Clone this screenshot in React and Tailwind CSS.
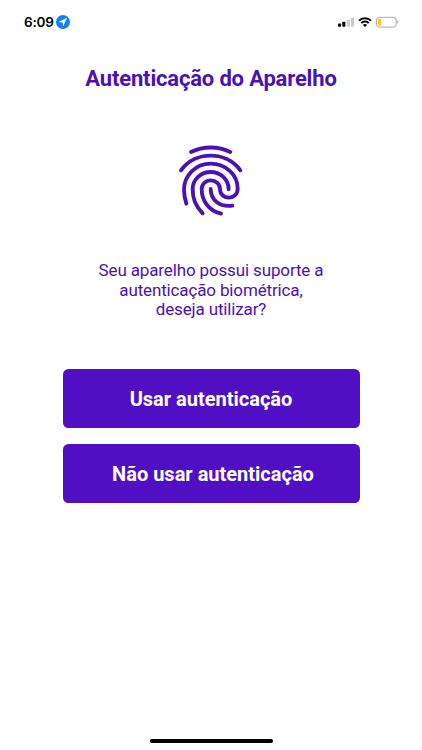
const Fingerprint = () => {
  return (
    <svg
      className="h-[92px] w-[92px]"
      viewBox="0 0 276 276"
      fill="none"
      stroke="currentColor"
      strokeWidth="11.5"
      strokeLinecap="round"
      strokeLinejoin="round"
    >
      <path d="M78 51C114 33 160 33 196 51" />
      <path d="M48 106C90 47 184 47 226 106" />
      <path d="M64 206C61 196 57 182 57 164C57 121 92 86 137 86C182 86 218 119 218 161C218 177 206 188 191 188S165 177 165 162C165 147 152 136 137 136S110 148 110 162C110 198 132 227 168 236" />
      <path d="M113 235C91 211 83 192 83 162C83 133 108 111 137 111C168 111 191 134 191 163" />
      <path d="M137 162C137 194 163 217 202 212" />
    </svg>
  );
};

const StatusBar = () => {
  return (
    <div className="flex h-11 items-center justify-between pr-[23px] pl-6">
      <div className="flex items-center gap-0.5">
        <span className="font-['Inter',sans-serif] text-[13.5px] leading-4 font-semibold tracking-[-0.2px] text-black">
          6:09
        </span>
        <svg className="h-3.5 w-3.5" viewBox="0 0 14 14">
          <circle cx="7" cy="7" r="7" fill="#147ff0" />
          <path d="M11.2 2.8L2.6 6.9L6.6 7.4L7.1 11.4Z" fill="#fff" />
        </svg>
      </div>
      <div className="flex items-center gap-1">
        <svg className="h-3 w-4" viewBox="0 0 16 12">
          <rect x="0" y="7.4" width="3.1" height="3.3" rx="0.8" fill="#000" />
          <rect x="4.3" y="5.8" width="3.1" height="4.9" rx="0.8" fill="#000" />
          <rect x="8.7" y="3.6" width="3.1" height="7.1" rx="0.8" fill="#ccc" />
          <rect x="12.9" y="1.4" width="3.1" height="9.3" rx="0.8" fill="#ccc" />
        </svg>
        <svg className="h-3 w-3.5" viewBox="0 0 14 12" fill="none" stroke="#000" strokeWidth="2">
          <path d="M1 4.6C4.3 1.3 9.7 1.3 13 4.6" />
          <path d="M3.3 7.1C5.3 5.1 8.7 5.1 10.7 7.1" />
          <path d="M4.9 8.9C6.1 7.8 7.9 7.8 9.1 8.9L7 11.1Z" fill="#000" stroke="none" />
        </svg>
        <svg className="h-3 w-[23px]" viewBox="0 0 23 12">
          <rect x="0.5" y="1.3" width="19.7" height="9.8" rx="2.8" fill="none" stroke="#aaa" />
          <rect x="2" y="2.8" width="3.2" height="6.8" rx="1.2" fill="#fdc71b" />
          <path d="M21.2 4.5C22.7 4.9 22.7 7.3 21.2 7.7Z" fill="#aaa" />
        </svg>
      </div>
    </div>
  );
};

const ActionButton = ({ children, className = "" }) => {
  return (
    <button
      type="button"
      className={`h-[59px] w-full rounded-[5.5px] bg-[#500fc2] text-[20px] font-bold text-white ${className}`}
    >
      {children}
    </button>
  );
};

const App = () => {
  return (
    <div className="flex h-screen flex-col bg-white font-['Roboto',sans-serif] text-[#4b11b4]">
      <StatusBar />

      <main className="flex flex-1 flex-col items-center">
        <h1 className="mt-5 text-[22px] leading-[30px] font-bold tracking-[-0.17px]">Autenticação do Aparelho</h1>

        <div className="mt-[41px]">
          <Fingerprint />
        </div>

        <p className="mt-[34px] text-center text-[17px] leading-[19.5px] tracking-[-0.14px]">
          Seu aparelho possui suporte a
          <br />
          autenticação biométrica,
          <br />
          deseja utilizar?
        </p>

        <div className="mt-[49.5px] flex w-[297px] flex-col gap-4">
          <ActionButton>Usar autenticação</ActionButton>
          <ActionButton className="pl-1">Não usar autenticação</ActionButton>
        </div>
      </main>

      <div className="mb-[7px] h-1 w-[123px] self-center rounded-full bg-black" />
    </div>
  );
};

export default App;
